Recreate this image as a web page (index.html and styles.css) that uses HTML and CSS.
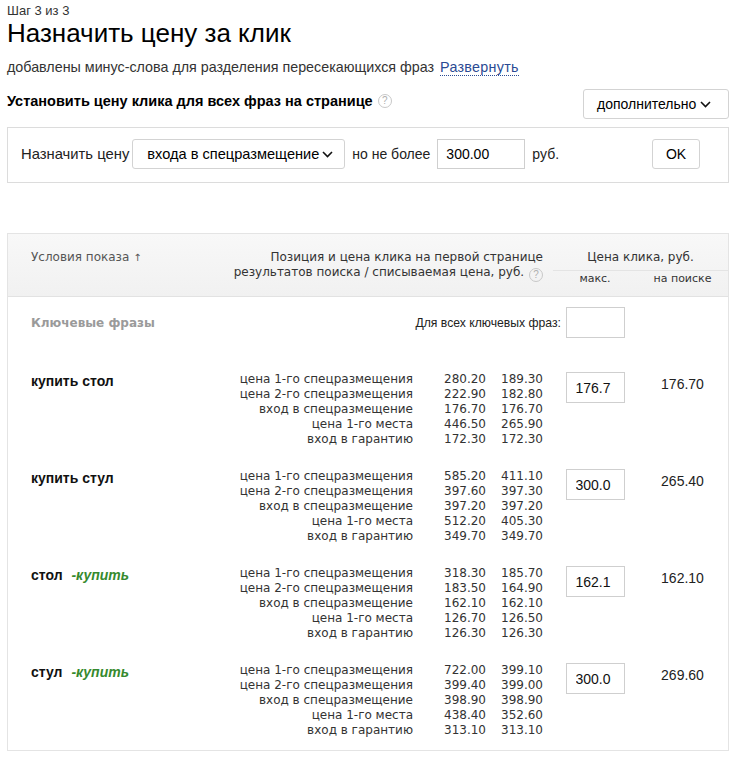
FILE: index.html
```html
<!DOCTYPE html>
<html lang="ru">
<head>
<meta charset="utf-8">
<title>Назначить цену за клик</title>
<link rel="stylesheet" href="styles.css">
</head>
<body>
<div class="page">
  <div class="step">Шаг 3 из 3</div>
  <h1 class="title">Назначить цену за клик</h1>
  <p class="note">добавлены минус-слова для разделения пересекающихся фраз <a class="link" href="#">Развернуть</a></p>

  <div class="bulk-head">
    <div class="bulk-title">Установить цену клика для всех фраз на странице <span class="hint">?</span></div>
    <button class="btn more">дополнительно <svg class="chev" width="11" height="7" viewBox="0 0 11 7"><polyline points="1,1 5.5,5.5 10,1"/></svg></button>
  </div>

  <div class="bulk-box">
    <span class="lbl wide">Назначить цену</span>
    <button class="btn select"><span class="sel-text">входа в спецразмещение</span><svg class="chev" width="11" height="7" viewBox="0 0 11 7"><polyline points="1,1 5.5,5.5 10,1"/></svg></button>
    <span class="lbl gap">но не более</span>
    <input class="field" type="text" value="300.00">
    <span class="lbl gap">руб.</span>
    <button class="btn ok">OK</button>
  </div>

  <div class="table">
    <div class="thead">
      <div class="th-cond">Условия показа <span class="arrow">↑</span></div>
      <div class="th-pos">
        <div>Позиция и цена клика на первой странице</div>
        <div>результатов поиска / списываемая цена, руб. <span class="hint small">?</span></div>
      </div>
      <div class="th-price">
        <div class="th-price-title">Цена клика, руб.</div>
        <div class="th-price-sub"><span>макс.</span><span>на поиске</span></div>
      </div>
    </div>

    <div class="row kw">
      <div class="kw-title">Ключевые фразы</div>
      <div class="kw-all"><span>Для всех ключевых фраз:</span><input class="cell-input" type="text" value=""></div>
    </div>

    <div class="row">
      <div class="phrase">купить стол</div>
      <div class="pos">
        <span class="pl">цена 1-го спецразмещения</span><span>280.20</span><span>189.30</span>
        <span class="pl">цена 2-го спецразмещения</span><span>222.90</span><span>182.80</span>
        <span class="pl">вход в спецразмещение</span><span>176.70</span><span>176.70</span>
        <span class="pl">цена 1-го места</span><span>446.50</span><span>265.90</span>
        <span class="pl">вход в гарантию</span><span>172.30</span><span>172.30</span>
      </div>
      <div class="max"><input class="cell-input" type="text" value="176.7"></div>
      <div class="search">176.70</div>
    </div>

    <div class="row">
      <div class="phrase">купить стул</div>
      <div class="pos">
        <span class="pl">цена 1-го спецразмещения</span><span>585.20</span><span>411.10</span>
        <span class="pl">цена 2-го спецразмещения</span><span>397.60</span><span>397.30</span>
        <span class="pl">вход в спецразмещение</span><span>397.20</span><span>397.20</span>
        <span class="pl">цена 1-го места</span><span>512.20</span><span>405.30</span>
        <span class="pl">вход в гарантию</span><span>349.70</span><span>349.70</span>
      </div>
      <div class="max"><input class="cell-input" type="text" value="300.0"></div>
      <div class="search">265.40</div>
    </div>

    <div class="row">
      <div class="phrase">стол <span class="minus">-купить</span></div>
      <div class="pos">
        <span class="pl">цена 1-го спецразмещения</span><span>318.30</span><span>185.70</span>
        <span class="pl">цена 2-го спецразмещения</span><span>183.50</span><span>164.90</span>
        <span class="pl">вход в спецразмещение</span><span>162.10</span><span>162.10</span>
        <span class="pl">цена 1-го места</span><span>126.70</span><span>126.50</span>
        <span class="pl">вход в гарантию</span><span>126.30</span><span>126.30</span>
      </div>
      <div class="max"><input class="cell-input" type="text" value="162.1"></div>
      <div class="search">162.10</div>
    </div>

    <div class="row last">
      <div class="phrase">стул <span class="minus">-купить</span></div>
      <div class="pos">
        <span class="pl">цена 1-го спецразмещения</span><span>722.00</span><span>399.10</span>
        <span class="pl">цена 2-го спецразмещения</span><span>399.40</span><span>399.00</span>
        <span class="pl">вход в спецразмещение</span><span>398.90</span><span>398.90</span>
        <span class="pl">цена 1-го места</span><span>438.40</span><span>352.60</span>
        <span class="pl">вход в гарантию</span><span>313.10</span><span>313.10</span>
      </div>
      <div class="max"><input class="cell-input" type="text" value="300.0"></div>
      <div class="search">269.60</div>
    </div>
  </div>
</div>
</body>
</html>
```
FILE: styles.css
```css
* { box-sizing: border-box; }

body {
  margin: 0;
  font-family: "Liberation Sans", Arial, sans-serif;
  color: #000;
  background: #fff;
}

.page {
  width: 722px;
  margin-left: 7px;
  padding-top: 3px;
}

.step {
  font-size: 13px;
  line-height: 15px;
  color: #333;
}

.title {
  margin: 0;
  font-size: 26px;
  font-weight: normal;
  line-height: 30px;
  color: #000;
}

.note {
  margin: 10px 0 0;
  font-size: 14.3px;
  line-height: 18px;
  color: #333;
}

.link {
  margin-left: 2px;
  color: #2a4a93;
  text-decoration: none;
  letter-spacing: 0.3px;
  border-bottom: 1px dotted #2a4a93;
}

.bulk-head {
  display: flex;
  justify-content: space-between;
  align-items: flex-start;
  margin-top: 13px;
}

.bulk-title {
  margin-top: 3px;
  font-size: 14.5px;
  line-height: 18px;
  font-weight: bold;
  display: flex;
  align-items: center;
  gap: 5px;
}

.hint {
  display: inline-flex;
  align-items: center;
  justify-content: center;
  width: 14px;
  height: 14px;
  border: 1px solid #c8c8c8;
  border-radius: 50%;
  font-family: "Liberation Sans", Arial, sans-serif;
  font-size: 10px;
  font-weight: normal;
  color: #b0b0b0;
  line-height: 1;
}

.hint.small {
  vertical-align: -2px;
  margin-left: 1px;
}

.btn {
  display: inline-flex;
  align-items: center;
  gap: 4px;
  height: 30px;
  padding: 0 10px 0 13px;
  font-family: "Liberation Sans", Arial, sans-serif;
  font-size: 14px;
  color: #000;
  background: #fff;
  border: 1px solid #d3d3d3;
  border-radius: 3px;
  white-space: nowrap;
  flex-shrink: 0;
}

.chev polyline {
  fill: none;
  stroke: #111;
  stroke-width: 1.6;
}

.more {
  width: 146px;
}

.bulk-box {
  display: flex;
  align-items: center;
  margin-top: 8px;
  padding: 11px 28px 13px 13px;
  border: 1px solid #dcdcdc;
  font-size: 14px;
  color: #222;
  white-space: nowrap;
}

.wide {
  font-size: 14.8px;
}

.lbl.gap {
  margin-left: 7px;
  margin-right: 7px;
}

.select {
  width: 213px;
  margin-left: 3px;
  padding: 0 8px 0 14px;
  gap: 3px;
}

.sel-text {
  font-size: 14.6px;
}

.field {
  width: 88px;
  height: 30px;
  padding: 0 8px;
  border: 1px solid #cfcfcf;
  font-family: "Liberation Sans", Arial, sans-serif;
  font-size: 14px;
  color: #000;
  flex-shrink: 0;
}

.ok {
  width: 48px;
  justify-content: center;
  padding: 0;
  margin-left: auto;
}

/* table */
.table {
  margin-top: 50px;
  border: 1px solid #e4e4e4;
  font-family: "DejaVu Sans", Verdana, sans-serif;
  font-size: 12px;
}

.thead,
.row {
  display: grid;
  grid-template-columns: 212px 333px 84px 91px;
}

.thead {
  background: linear-gradient(to bottom, #f8f8f8, #f1f1f1);
  border-bottom: 1px solid #e2e2e2;
  line-height: 15px;
}

.th-cond {
  padding: 16px 0 0 23px;
  color: #555;
}

.arrow {
  font-size: 10px;
}

.th-pos {
  padding: 16px 10px 14px 0;
  text-align: right;
  color: #333;
}

.th-price {
  grid-column: 3 / 5;
  padding-top: 16px;
  color: #333;
}

.th-price-title {
  text-align: center;
  padding-bottom: 5px;
  border-bottom: 1px solid #e4e4e4;
}

.th-price-sub {
  display: grid;
  grid-template-columns: 84px 91px;
  padding-top: 1px;
  font-size: 11px;
  line-height: 14px;
  text-align: center;
  color: #333;
}

.row {
  padding: 11px 0;
}

.row.last {
  padding-bottom: 12px;
}

.row.kw {
  align-items: center;
  padding: 10px 0 23px;
}

.kw-title {
  padding-left: 23px;
  font-weight: bold;
  color: #9a9a9a;
}

.kw-all {
  grid-column: 2 / 4;
  display: flex;
  justify-content: flex-end;
  align-items: center;
  gap: 5px;
  padding-right: 12px;
  font-family: "Liberation Sans", Arial, sans-serif;
  font-size: 12.2px;
  color: #222;
}

.cell-input {
  width: 59px;
  height: 31px;
  padding: 0 9px;
  border: 1px solid #cfcfcf;
  font-family: "Liberation Sans", Arial, sans-serif;
  font-size: 14px;
  color: #111;
}

.phrase {
  padding-left: 23px;
  font-family: "Liberation Sans", Arial, sans-serif;
  font-size: 14px;
  font-weight: bold;
  line-height: 18px;
  color: #111;
}

.minus {
  margin-left: 5px;
  font-style: italic;
  color: #368a2e;
}

.pos {
  display: grid;
  grid-template-columns: 1fr 73px 57px;
  padding-right: 10px;
  line-height: 15px;
  color: #333;
  text-align: right;
}

.max {
  display: flex;
  justify-content: center;
  align-items: flex-start;
}

.search {
  padding-top: 3px;
  text-align: center;
  font-family: "Liberation Sans", Arial, sans-serif;
  font-size: 14px;
  line-height: 18px;
  color: #222;
}
```
